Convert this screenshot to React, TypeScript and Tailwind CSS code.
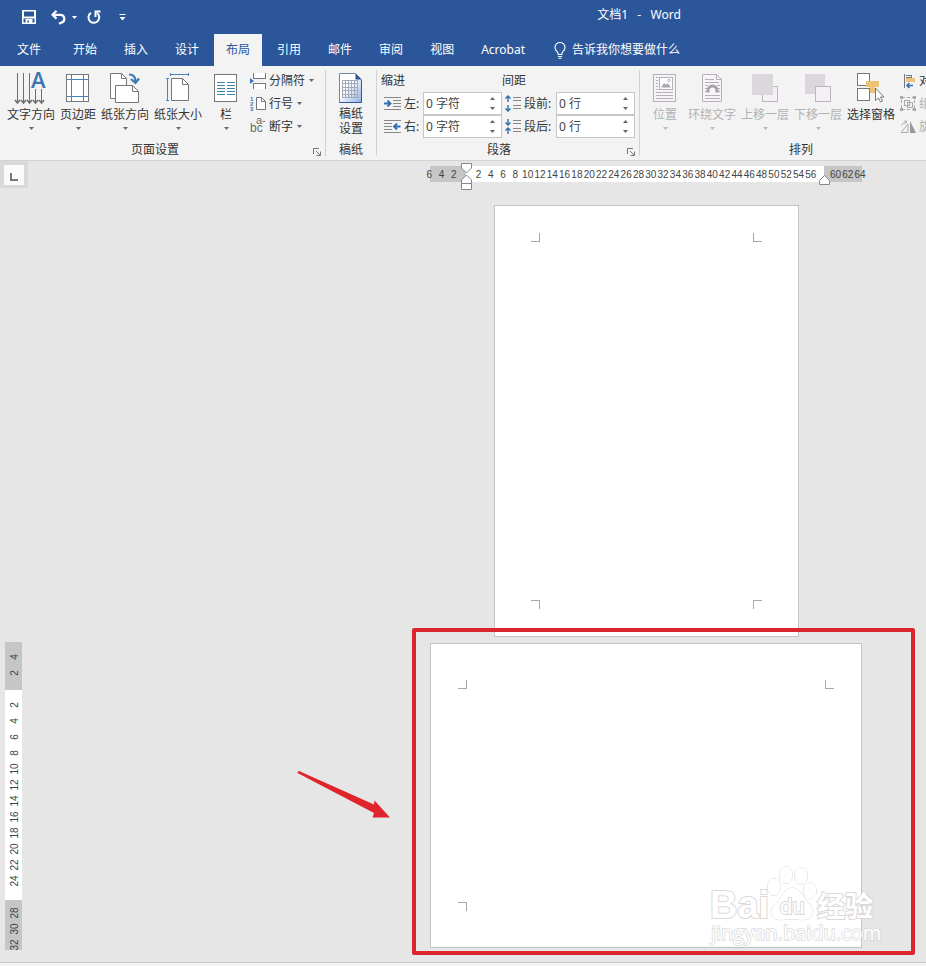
import React from "react";
import clsx from "clsx";

const TABS = ["开始", "插入", "设计", "布局", "引用", "邮件", "审阅", "视图"];

// Horizontal ruler labels, blank where a marker or a margin edge sits
const H_RULER = ["6", "4", "2", "", ...Array.from({ length: 28 }, (_, i) => String((i + 1) * 2)), "", "60", "62", "64"];
const V_RULER = ["4", "2", "", ...Array.from({ length: 12 }, (_, i) => String((i + 1) * 2)), "", "28", "30", "32"];

const Caret: React.FC<{ className?: string }> = ({ className }) => (
  <svg width="5" height="3" viewBox="0 0 5 3" className={clsx("shrink-0", className)} fill="currentColor" aria-hidden="true">
    <path d="M0 0h5L2.5 3z" />
  </svg>
);

/* ---------- icons ---------- */

const SaveIcon = () => (
  <svg width="15" height="15" viewBox="0 0 15 15" fill="white" fillRule="evenodd" aria-hidden="true">
    <path d="M0 0h14v14H0zM2 1.500v5h10v-5zM3.500 9v3.500H5V10h4.500v2.500h1V9z" />
    <path d="M1.500 8h11v4.500h-11z" fill="#2b579a" />
    <path d="M3.500 9h7v5h-7zM5.500 10.500V14h1.500v-3.500z" />
    <path d="M0 7h14v1.500H0z" />
  </svg>
);

const UndoIcon = () => (
  <svg width="15" height="15" viewBox="0 0 15 15" fill="none" stroke="white" strokeWidth="2.2" aria-hidden="true">
    <path d="M5.500.800 1.500 4.800l4 4M1.800 4.800H9a4 4 0 0 1 1.500 7.800L8 13.800" />
  </svg>
);

const RedoIcon = () => (
  <svg width="14" height="15" viewBox="0 0 14 15" fill="none" stroke="white" strokeWidth="2" aria-hidden="true">
    <path d="M4 2.800a5.400 5.400 0 1 0 6 .200" />
    <path d="M13.500 1.500H8.500v5.500" />
  </svg>
);

const BulbIcon = () => (
  <svg width="12" height="17" viewBox="0 0 12 17" fill="none" stroke="white" strokeWidth="1.1" aria-hidden="true">
    <path d="M4 12.500V11C3.500 9.500 1 8.500 1 5.500a5 5 0 0 1 10 0C11 8.500 8.500 9.500 8 11v1.500zM4 14.500h4M4.500 16.300h3" />
  </svg>
);

const TextDirectionIcon = () => (
  <svg width="34" height="34" viewBox="0 0 34 34" className="overflow-visible" aria-hidden="true">
    <g stroke="#6f6f6f" fill="none">
      <path d="M3.500 1v30M9.500 1v30M15.500 1v30M21.500 17v14M27.500 17v14" shapeRendering="crispEdges" />
      <path d="M1 28l2.500 3L6 28M7 28l2.500 3 2.500-3M13 28l2.500 3 2.500-3M19 28l2.500 3 2.500-3M25 28l2.500 3 2.500-3" strokeWidth="1.600" />
    </g>
    <text x="17" y="16" fontSize="22" fontWeight="600" fontFamily="Open Sans, sans-serif" fill="#3b76b4">A</text>
  </svg>
);

const MarginsIcon = () => (
  <svg width="24" height="34" viewBox="0 0 24 34" fill="none" shapeRendering="crispEdges" aria-hidden="true">
    <path d="M.5 2.500h22v27H.5z" fill="#fff" stroke="#777" />
    <path d="M5.500 3v26M17.500 3v26M1 7.500h21M1 24.500h21" stroke="#4a83b8" />
  </svg>
);

const OrientationIcon = () => (
  <svg width="30" height="34" viewBox="0 0 30 34" fill="#fff" stroke="#777" aria-hidden="true">
    <path d="M.5 1.500h11l5 5v20H.5z" />
    <path d="M11.500 1.500v5h5" fill="none" />
    <path d="M5.500 13.500h17l6 6v11h-23z" />
    <path d="M22.500 13.500v6h6" fill="none" />
    <path d="M19 2.500c4 0 6.500 2 6.500 7M21 7l4.500 4L29 6.500" fill="none" stroke="#3b7ab5" strokeWidth="2.200" />
  </svg>
);

const PaperSizeIcon = () => (
  <svg width="24" height="34" viewBox="0 0 24 34" fill="none" aria-hidden="true">
    <path d="M4.500 2.500h18M4.500 1v3M22.500 1v3M1.500 6.500v22M0 6.500h3M0 28.500h3" stroke="#4a83b8" shapeRendering="crispEdges" />
    <path d="M5.500 6.500h11l6 6v16h-17z" fill="#fff" stroke="#777" />
    <path d="M16.500 6.500v6h6" stroke="#777" />
  </svg>
);

const ColumnsIcon = () => (
  <svg width="24" height="34" viewBox="0 0 24 34" fill="none" shapeRendering="crispEdges" aria-hidden="true">
    <path d="M.5 2.500h22v27H.5z" fill="#fff" stroke="#777" />
    <path d="M3 10.500h8M13 10.500h8M3 13.500h8M13 13.500h8M3 16.500h8M13 16.500h8M3 19.500h8M13 19.500h8M3 22.500h8M13 22.500h8" stroke="#3f86a8" />
  </svg>
);

const BreaksIcon = () => (
  <svg width="16" height="16" viewBox="0 0 16 16" fill="none" aria-hidden="true">
    <path d="M3.500 0v5.500h12V0M3.500 16v-5.500h12V16" fill="#fff" stroke="#777" shapeRendering="crispEdges" />
    <path d="M0 5l4 3-4 3z" fill="#3b76b4" />
  </svg>
);

const LineNumbersIcon = () => (
  <svg width="16" height="16" viewBox="0 0 16 16" fill="none" className="overflow-visible" aria-hidden="true">
    <g fontSize="6" fontFamily="Liberation Sans, sans-serif" fontWeight="700" fill="#3b76b4">
      <text x="0" y="5">1</text>
      <text x="0" y="10">2</text>
      <text x="0" y="15">3</text>
    </g>
    <path d="M6.500 1.500h5l4 4v8h-9z" fill="#fff" stroke="#777" />
    <path d="M11.500 1.500v4h4" stroke="#777" />
  </svg>
);

const HyphenIcon = () => (
  <svg width="16" height="16" viewBox="0 0 16 16" className="overflow-visible" fill="#6a6a6a" aria-hidden="true">
    <text x="0" y="13" fontSize="12" fontFamily="Liberation Sans, sans-serif">
      bc
      <tspan x="6" y="5" fontSize="11">
        a-
      </tspan>
    </text>
  </svg>
);

const GridPaperIcon = () => (
  <svg width="24" height="34" viewBox="0 0 24 34" aria-hidden="true">
    <defs>
      <linearGradient id="gridPaper" x1="0" y1="0" x2="1" y2="1">
        <stop offset="0.4" stopColor="#fff" />
        <stop offset="1" stopColor="#8eb0e4" />
      </linearGradient>
    </defs>
    <path d="M.5 1.500h16l6 6v23H.5z" fill="url(#gridPaper)" stroke="#6f86ad" />
    <path d="M16.500 1.500v6h6z" fill="#31558f" />
    <path d="M22.500 8v22.500H.5" fill="none" stroke="#2d5aa0" />
    <path
      d="M3.500 8.500h15M3.500 11.500h15M3.500 15.500h15M3.500 18.500h15M3.500 22.500h15M3.500 25.500h15M3.500 8v18M6.500 8v18M9.500 8v18M12.500 8v18M15.500 8v18M18.500 8v18"
      fill="none"
      stroke="#a3a9b8"
      shapeRendering="crispEdges"
    />
  </svg>
);

const IndentIcon: React.FC<{ side: "left" | "right" }> = ({ side }) => (
  <svg width="17" height="13" viewBox="0 0 17 13" fill="none" aria-hidden="true">
    {side === "left" ? (
      <>
        <path d="M0 .5h17M9 3.500h8M9 6.500h8M9 9.500h8M0 12.500h17" stroke="#888" shapeRendering="crispEdges" />
        <path d="M0 6.500h6M3.500 3.500l3 3-3 3" stroke="#2f6eb0" strokeWidth="1.800" />
      </>
    ) : (
      <>
        <path d="M0 .5h17M0 3.500h8M0 6.500h8M0 9.500h8M0 12.500h17" stroke="#888" shapeRendering="crispEdges" />
        <path d="M16.500 6.500h-6M13 3.500l-3 3 3 3" stroke="#2f6eb0" strokeWidth="1.800" />
      </>
    )}
  </svg>
);

const SpacingIcon: React.FC<{ side: "before" | "after" }> = ({ side }) => (
  <svg width="16" height="17" viewBox="0 0 16 17" fill="none" aria-hidden="true">
    <path d="M8 2.500h8M8 5.500h8M8 10.500h8M8 13.500h8" stroke="#888" shapeRendering="crispEdges" />
    {side === "before" ? (
      <path d="M3 7V1M.5 3.500 3 1l2.500 2.500M3 10v6M.5 13.500 3 16l2.500-2.500" stroke="#2f6eb0" strokeWidth="1.400" />
    ) : (
      <path d="M3 1v6M.5 4.500 3 7l2.500-2.500M3 16v-6M.5 12.500 3 10l2.500 2.500" stroke="#2f6eb0" strokeWidth="1.400" />
    )}
  </svg>
);

const PositionIcon = () => (
  <svg width="24" height="34" viewBox="0 0 24 34" fill="none" stroke="#b5b0b8" aria-hidden="true">
    <g shapeRendering="crispEdges">
      <path d="M.5 2.500h22v27H.5z" fill="#f7f4f8" />
      <path d="M6.500 5.500h13v12h-13z" fill="#fff" />
      <path d="M3 5.500h2M3 8.500h2M3 11.500h2M3 14.500h2M3 17.500h2M3 20.500h17M3 23.500h17M3 26.500h17" />
    </g>
    <path d="M8 15.500 11 11l2 2 1.500-2 3.500 4.500z" fill="#a9a5ac" stroke="none" />
    <circle cx="16" cy="8.500" r="1.200" />
  </svg>
);

const WrapTextIcon = () => (
  <svg width="21" height="34" viewBox="0 0 21 34" fill="none" stroke="#b5b0b8" aria-hidden="true">
    <path d="M.5 2.500h14l5 5v22H.5z" fill="#f7f4f8" />
    <path d="M14.500 2.500v5h5" />
    <path d="M3 7.500h9M3 10.500h14M3 13.500h3M15 13.500h3M3 16.500h2M16 16.500h2M3 19.500h2M16 19.500h2M3 23.500h15M3 26.500h15" shapeRendering="crispEdges" />
    <path d="M6 20.500v-2a4.500 4.500 0 0 1 9 0v2" stroke="#a5a1a8" strokeWidth="3" />
  </svg>
);

const BringForwardIcon = () => (
  <svg width="26" height="34" viewBox="0 0 26 34" fill="#f5f0f5" stroke="#bbb7bd" shapeRendering="crispEdges" aria-hidden="true">
    <path d="M10.500 14.500h15v15h-15z" />
    <path d="M0 2h21v21H0z" fill="#dbd7dc" stroke="none" />
  </svg>
);

const SendBackwardIcon = () => (
  <svg width="26" height="34" viewBox="0 0 26 34" fill="#f5f0f5" stroke="#bbb7bd" shapeRendering="crispEdges" aria-hidden="true">
    <path d="M0 2h20v20H0z" fill="#dbd7dc" stroke="none" />
    <path d="M10.500 14.500h15v15h-15z" />
  </svg>
);

const SelectionPaneIcon = () => (
  <svg width="28" height="34" viewBox="0 0 28 34" fill="#fff" stroke="#777" aria-hidden="true">
    <g shapeRendering="crispEdges">
      <path d="M.5 1.500h12v12H.5zM.5 16.500h12v12H.5z" />
      <path d="M9 9h13v6h-4v6h-5v-6H9z" fill="#ecc276" stroke="none" />
    </g>
    <path d="M18.500 16v12.500l3-2.500 2 4 2-1-2-4h3.500z" />
  </svg>
);

const AlignIcon = () => (
  <svg width="16" height="16" viewBox="0 0 16 16" fill="none" aria-hidden="true">
    <path d="M4.500 1v14M6 2.500h5v2H6" stroke="#777" shapeRendering="crispEdges" />
    <path d="M6 5h9v4H6z" fill="#ecc276" />
    <path d="M13 12.500H7M9.500 10 7 12.500 9.500 15" stroke="#2f6eb0" strokeWidth="1.500" />
  </svg>
);

const GroupIcon = () => (
  <svg width="16" height="16" viewBox="0 0 16 16" fill="none" stroke="#aaa" shapeRendering="crispEdges" aria-hidden="true">
    <path d="M1.500 1.500h13v12h-13z" strokeDasharray="3 2" />
    <path d="M4.500 4.500h5v5h-5zM7.500 6.500h5v5h-5z" fill="#f2f2f2" />
    <path d="M0 0h3v3H0zM13 0h3v3h-3zM0 12h3v3H0zM13 12h3v3h-3z" fill="#aaa" stroke="none" />
  </svg>
);

const RotateIcon = () => (
  <svg width="16" height="16" viewBox="0 0 16 16" fill="none" stroke="#aaa" aria-hidden="true">
    <path d="M8 5v8.500H1z" />
    <path d="M10 2l6 12h-6z" fill="#999" stroke="none" />
    <path d="M2 6.500C2.500 4 4 3 6 3M4.500 1 7 3 4.500 5" />
  </svg>
);

const LauncherIcon = () => (
  <svg width="8" height="8" viewBox="0 0 8 8" fill="none" stroke="#777" aria-hidden="true">
    <path d="M.5 6V.5H6M3 3l4 4M7.500 3.500v4h-4" />
  </svg>
);

/* ---------- ribbon parts ---------- */

interface RibbonGroupProps {
  label: string;
  className?: string;
  launcher?: boolean;
  children: React.ReactNode;
}

const RibbonGroup: React.FC<RibbonGroupProps> = ({ label, className, launcher, children }) => (
  <section aria-label={label} className={clsx("relative flex shrink-0 flex-col", className)}>
    <div className="flex h-[75px]">{children}</div>
    <div className={clsx("text-center leading-[18px]", launcher && "pr-[22px]")}>{label}</div>
    {launcher && (
      <button className="absolute right-1 bottom-1" aria-label={`${label}选项`}>
        <LauncherIcon />
      </button>
    )}
  </section>
);

const Separator = () => <div className="my-1 w-px shrink-0 bg-[#d2d2d2]" />;

interface BigButtonProps {
  icon: React.ReactNode;
  label: string;
  className?: string;
  disabled?: boolean;
  caret?: boolean;
}

const BigButton: React.FC<BigButtonProps> = ({ icon, label, className, disabled, caret = true }) => (
  <button
    disabled={disabled}
    className={clsx("flex shrink-0 flex-col items-center pt-1.5 whitespace-nowrap", disabled && "text-[#b1b1b1]", className)}
  >
    {icon}
    <span className="leading-[18px]">{label}</span>
    {caret && <Caret className={clsx("mt-[3px]", disabled ? "text-[#bcbcbc]" : "text-[#666]")} />}
  </button>
);

interface SmallButtonProps {
  icon: React.ReactNode;
  label: string;
  disabled?: boolean;
}

const SmallButton: React.FC<SmallButtonProps> = ({ icon, label, disabled }) => (
  <button disabled={disabled} className={clsx("flex h-[23px] items-center whitespace-nowrap", disabled && "text-[#b1b1b1]")}>
    {icon}
    <span className="ml-[3px]">{label}</span>
    <Caret className="ml-1 text-[#666]" />
  </button>
);

interface SpinFieldProps {
  id: string;
  icon: React.ReactNode;
  label: string;
  value: string;
}

const SpinField: React.FC<SpinFieldProps> = ({ id, icon, label, value }) => (
  <div className="flex h-[23px] items-center pl-[3px]">
    {icon}
    <label htmlFor={id} className="ml-[3px] flex-1 whitespace-nowrap">
      {label}
    </label>
    <div className="flex h-[23px] w-[79px] items-center border border-[#c6c6c6] bg-white pr-1.5">
      <input id={id} defaultValue={value} className="w-0 flex-1 bg-transparent px-0.5 text-[#444] outline-none" />
      <div className="flex flex-col gap-[7px] text-[#666]">
        <button aria-label={`${label}增加`}>
          <Caret className="rotate-180" />
        </button>
        <button aria-label={`${label}减少`}>
          <Caret />
        </button>
      </div>
    </div>
  </div>
);

/* ---------- document parts ---------- */

const Corner: React.FC<{ className: string }> = ({ className }) => (
  <div className={clsx("h-[9px] w-[9px] border-[#a8a8a8]", className)} />
);

const Page: React.FC<{ className: string }> = ({ className }) => (
  <article className={clsx("flex flex-col justify-between border border-[#c4c4c4] bg-white", className)}>
    <div className="flex justify-between">
      <Corner className="border-r border-b" />
      <Corner className="border-b border-l" />
    </div>
    <div className="flex justify-between">
      <Corner className="border-t border-r" />
      <Corner className="border-t border-l" />
    </div>
  </article>
);

const HorizontalRuler = () => (
  <div className="relative flex h-4 w-[432px] text-[10px] text-[#444]">
    <div className="w-9 bg-[#c6c6c6]" />
    <div className="flex-1 bg-white" />
    <div className="w-[38px] bg-[#c6c6c6]" />
    <div className="absolute inset-y-0 -right-1 -left-[7px] flex pt-0.5 font-['Liberation_Sans',sans-serif]">
      {H_RULER.map((n, i) => (
        <span key={i} className="flex w-0 flex-1 items-center justify-center">
          {n}
        </span>
      ))}
    </div>
    <svg width="12" height="28" viewBox="0 0 12 28" className="absolute -top-[3px] left-[31px]" fill="#fff" stroke="#888" aria-hidden="true">
      <path d="M.5.5h10V5l-5 5-5-5zM.5 20.500V17l5-5 5 5v3.500zM.5 20.500h10v6H.5z" />
    </svg>
    <svg width="12" height="10" viewBox="0 0 12 10" className="absolute top-[9px] left-[389px]" fill="#fff" stroke="#888" aria-hidden="true">
      <path d="M.5 9.500v-4l5-5 5 5v4z" />
    </svg>
  </div>
);

const VerticalRuler = () => (
  <div className="relative ml-[5px] flex h-[308px] w-[17px] flex-col overflow-hidden text-[10px] text-[#444]">
    <div className="h-12 bg-[#c6c6c6]" />
    <div className="flex-1 bg-white" />
    <div className="h-[50px] bg-[#c6c6c6]" />
    <div className="absolute inset-x-0 top-[7px] flex flex-col pl-0.5 font-['Liberation_Sans',sans-serif]">
      {V_RULER.map((n, i) => (
        <span key={i} className="flex h-4 -rotate-90 items-center justify-center">
          {n}
        </span>
      ))}
    </div>
  </div>
);

const Watermark = () => (
  <svg width="172" height="86" viewBox="0 0 172 86" className="absolute top-[221px] left-[279px]" fill="#fff" stroke="#d9d9d9" aria-hidden="true">
    <g fontWeight="700" paintOrder="stroke" strokeWidth="2">
      <text x="1" y="54" fontSize="38" fontFamily="Liberation Sans, sans-serif">Bai</text>
      <g strokeWidth="1">
        <ellipse cx="65" cy="23" rx="6.500" ry="8.500" />
        <ellipse cx="77" cy="11" rx="6.500" ry="8.500" />
        <ellipse cx="92" cy="12" rx="6.500" ry="8.500" />
        <ellipse cx="101" cy="27" rx="6.500" ry="8" />
        <path d="M83 24c8 0 10 8 15 13s7 9 5 14c-2 6-8 5-20 4-12 1-18 2-20-4-2-5 1-9 6-14s6-13 14-13z" />
      </g>
      <text x="71" y="50" fontSize="22" fontWeight="400" fontFamily="Liberation Sans, sans-serif">du</text>
      <text x="108" y="53" fontSize="28" fontFamily="Noto Sans CJK SC, sans-serif">经验</text>
      <text x="2" y="76" fontSize="20" fontWeight="400" strokeWidth="1.500" fontFamily="Open Sans, sans-serif">jingyan.baidu.com</text>
    </g>
  </svg>
);

const Annotation = () => (
  <>
    <div className="absolute -top-[15px] -right-[53px] -bottom-[7px] -left-[18px] rounded-xs border-4 border-[#dc262e]" />
    <svg width="94" height="50" viewBox="0 0 94 50" className="absolute top-[128px] -left-[133px]" fill="#df242b" aria-hidden="true">
      <path d="M1 .500 2 0 77 33.500 77.500 29.500 93 46.500 75.500 46.500 77 42 .500 2z" />
    </svg>
  </>
);

export default function App() {
  return (
    <div className="flex min-h-screen flex-col overflow-hidden bg-[#e6e6e6] font-['Noto_Sans','Noto_Sans_CJK_SC',sans-serif] text-xs text-[#333]">
      <header className="bg-[#2b579a] text-white">
        <div className="flex h-[34px] items-center pl-[22px]">
          <div className="flex items-center">
            <button aria-label="保存">
              <SaveIcon />
            </button>
            <button className="ml-3.5 flex items-center gap-1.5" aria-label="撤消">
              <UndoIcon />
              <Caret />
            </button>
            <button className="ml-2.5" aria-label="重复">
              <RedoIcon />
            </button>
            <button className="ml-[18px]" aria-label="自定义快速访问工具栏">
              <svg width="7" height="7" viewBox="0 0 7 7" fill="white" aria-hidden="true">
                <path d="M.5 0h6v1h-6zM.5 3h6l-3 3.500z" />
              </svg>
            </button>
          </div>
          <h1 className="flex-1 pb-1 pl-[226px] text-center whitespace-pre">文档1   -   Word</h1>
        </div>
        <nav className="flex h-8 items-stretch gap-[3px] pl-[5px]">
          <button className="mr-[5px] px-3">文件</button>
          {TABS.map((tab) => (
            <button
              key={tab}
              className={clsx("px-3 whitespace-nowrap", tab === "布局" && "bg-[#f3f3f3] text-[#2b579a]")}
            >
              {tab}
            </button>
          ))}
          <button className="px-3">Acrobat</button>
          <button className="ml-3.5 flex items-center gap-1.5 whitespace-nowrap">
            <BulbIcon />
            告诉我你想要做什么
          </button>
        </nav>
      </header>

      <div className="flex h-[95px] overflow-hidden border-b border-[#d2d2d2] bg-[#f3f3f3]">
        <RibbonGroup label="页面设置" className="w-[325px] pl-[7px]" launcher>
          <div className="flex gap-[5px]">
            <BigButton icon={<TextDirectionIcon />} label="文字方向" />
            <BigButton icon={<MarginsIcon />} label="页边距" />
            <BigButton icon={<OrientationIcon />} label="纸张方向" />
            <BigButton icon={<PaperSizeIcon />} label="纸张大小" />
            <BigButton icon={<ColumnsIcon />} label="栏" className="w-[38px]" />
            <div className="flex flex-col items-start pt-[3px]">
              <SmallButton icon={<BreaksIcon />} label="分隔符" />
              <SmallButton icon={<LineNumbersIcon />} label="行号" />
              <SmallButton icon={<HyphenIcon />} label="断字" />
            </div>
          </div>
        </RibbonGroup>
        <Separator />

        <RibbonGroup label="稿纸" className="w-[50px]">
          <button className="flex flex-1 flex-col items-center pt-1.5">
            <GridPaperIcon />
            <span className="leading-[15px]">
              稿纸
              <br />
              设置
            </span>
          </button>
        </RibbonGroup>
        <Separator />

        <RibbonGroup label="段落" className="w-[262px] pl-1" launcher>
          <div className="flex pt-[3px]">
            <fieldset className="w-[121px]">
              <legend className="h-[23px] leading-[23px]">缩进</legend>
              <SpinField id="indent-left" icon={<IndentIcon side="left" />} label="左:" value="0 字符" />
              <SpinField id="indent-right" icon={<IndentIcon side="right" />} label="右:" value="0 字符" />
            </fieldset>
            <fieldset className="w-[133px]">
              <legend className="h-[23px] leading-[23px]">间距</legend>
              <SpinField id="space-before" icon={<SpacingIcon side="before" />} label="段前:" value="0 行" />
              <SpinField id="space-after" icon={<SpacingIcon side="after" />} label="段后:" value="0 行" />
            </fieldset>
          </div>
        </RibbonGroup>
        <Separator />

        <RibbonGroup label="排列" className="w-[322px]">
          <div className="flex gap-[5px] pl-[7px]">
            <BigButton icon={<PositionIcon />} label="位置" className="w-9" disabled />
            <BigButton icon={<WrapTextIcon />} label="环绕文字" disabled />
            <BigButton icon={<BringForwardIcon />} label="上移一层" disabled />
            <BigButton icon={<SendBackwardIcon />} label="下移一层" disabled />
            <BigButton icon={<SelectionPaneIcon />} label="选择窗格" caret={false} />
            <div className="flex flex-col items-start pt-[3px]">
              <SmallButton icon={<AlignIcon />} label="对齐" />
              <SmallButton icon={<GroupIcon />} label="组合" disabled />
              <SmallButton icon={<RotateIcon />} label="旋转" disabled />
            </div>
          </div>
        </RibbonGroup>
      </div>

      <main className="flex flex-1">
        <aside className="w-7 shrink-0">
          <button className="flex h-[27px] w-7 items-center justify-center bg-[#d9d9d9]" aria-label="左对齐式制表符">
            <span className="flex h-5 w-5 items-center justify-center bg-[#fafafa] pt-1">
              <span className="h-2 w-2 border-b-2 border-l-2 border-[#777]" />
            </span>
          </button>
          <div className="pt-[454px]">
            <VerticalRuler />
          </div>
        </aside>
        <div className="flex flex-1 flex-col items-center pt-[5px] pb-3.5 pl-[338px]">
          <HorizontalRuler />
          <Page className="mt-[23px] h-[432px] w-[305px] px-9 py-[27px]" />
          <div className="relative mt-1.5">
            <Page className="h-[305px] w-[432px] px-[27px] py-9" />
            <Watermark />
            <Annotation />
          </div>
        </div>
      </main>

      <footer className="h-1 border-t border-[#c6c6c6] bg-[#f3f3f3]" />
    </div>
  );
}
